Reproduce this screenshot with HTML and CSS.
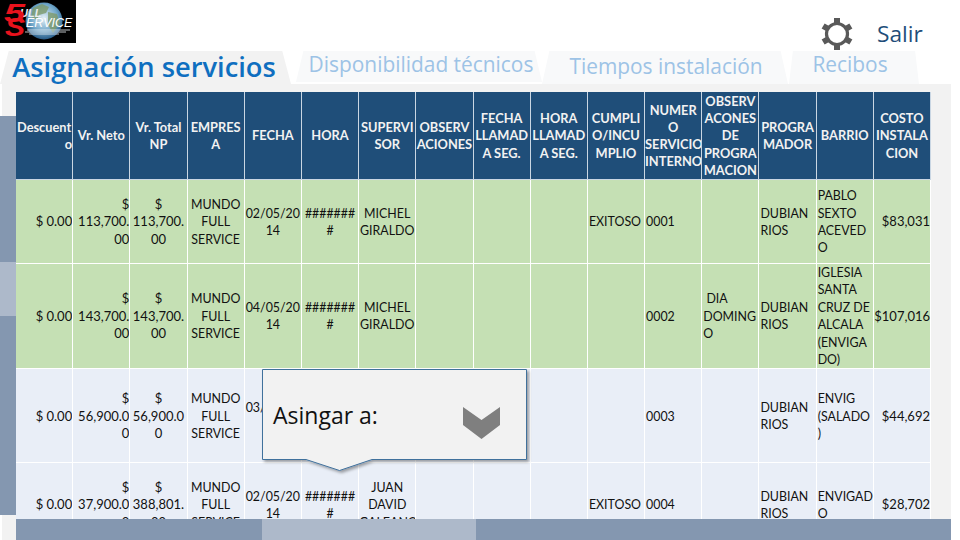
FILE: index.html
```html
<!DOCTYPE html>
<html lang="es">
<head>
<meta charset="utf-8">
<title>Asignación servicios</title>
<link rel="stylesheet" href="styles.css">
</head>
<body>
<div class="page">
  <header class="top">
    <svg class="logo" viewBox="0 0 76 43" width="76" height="43" aria-label="Full Service">
      <defs>
        <radialGradient id="globe" cx="0.5" cy="0.42" r="0.62">
          <stop offset="0" stop-color="#e4eff5"/>
          <stop offset="0.6" stop-color="#6fa6c9"/>
          <stop offset="1" stop-color="#174a78"/>
        </radialGradient>
      </defs>
      <rect width="76" height="43" fill="#000"/>
      <circle cx="44" cy="21" r="18.5" fill="url(#globe)"/>
      <path d="M33 8l9-4 7 3-3 6-7 2-2 5-6-3zM48 12l9 2 3 9-7 10-5-8z" fill="#7d9a6a" opacity=".8"/>
      <text x="20" y="17" class="logo-full">ULL</text>
      <text x="26" y="27" class="logo-service">ERVICE</text>
      <path d="M27 30h43M25 32h41M29 34h30" stroke="#e8eef2" stroke-width=".8"/>
      <text x="4" y="22" class="logo-num" textLength="21" lengthAdjust="spacingAndGlyphs">5</text>
      <text x="5" y="36" class="logo-num" textLength="20" lengthAdjust="spacingAndGlyphs">S</text>
    </svg>
    <div class="actions">
      <svg class="gear" viewBox="0 0 32 32" width="32" height="32" aria-label="Ajustes">
        <circle cx="16" cy="16" r="10.5" fill="none" stroke="#595959" stroke-width="3.2"/>
        <g fill="#595959">
          <rect x="13" y="0" width="6" height="6"/>
          <rect x="13" y="26" width="6" height="6"/>
          <rect x="13" y="0" width="6" height="6" transform="rotate(60 16 16)"/>
          <rect x="13" y="0" width="6" height="6" transform="rotate(120 16 16)"/>
          <rect x="13" y="0" width="6" height="6" transform="rotate(240 16 16)"/>
          <rect x="13" y="0" width="6" height="6" transform="rotate(300 16 16)"/>
        </g>
      </svg>
      <span class="exit">Salir</span>
    </div>
  </header>

  <nav class="tabs">
    <div class="tab tab-active">Asignación servicios</div>
    <div class="tab tab-two">Disponibilidad técnicos</div>
    <div class="tab tab-three">Tiempos instalación</div>
    <div class="tab tab-four">Recibos</div>
  </nav>

  <main class="panel">
    <div class="side-track"><div class="side-thumb"></div></div>
    <div class="sheet">
      <table class="grid">
        <thead>
          <tr>
            <th>Descuent<br><span class="end">o</span></th>
            <th>Vr. Neto</th>
            <th>Vr. Total NP</th>
            <th>EMPRES A</th>
            <th>FECHA</th>
            <th>HORA</th>
            <th>SUPERVI SOR</th>
            <th>OBSERV ACIONES</th>
            <th>FECHA LLAMAD A SEG.</th>
            <th>HORA LLAMAD A SEG.</th>
            <th>CUMPLI O/INCU MPLIO</th>
            <th>NUMER O SERVICIO INTERNO</th>
            <th>OBSERV ACONES DE PROGRA MACION</th>
            <th>PROGRA MADOR</th>
            <th>BARRIO</th>
            <th>COSTO INSTALA CION</th>
          </tr>
        </thead>
        <tbody>
          <tr class="row-a">
            <td class="num">$ 0.00</td>
            <td class="num">$<br>113,700.<br>00</td>
            <td class="mid amt">$<br>113,700.<br>00</td>
            <td class="mid">MUNDO FULL SERVICE</td>
            <td class="mid">02/05/20<br>14</td>
            <td class="mid">#######<br>#</td>
            <td class="mid">MICHEL GIRALDO</td>
            <td></td><td></td><td></td>
            <td>EXITOSO</td>
            <td>0001</td>
            <td></td>
            <td>DUBIAN RIOS</td>
            <td>PABLO SEXTO ACEVED<br>O</td>
            <td class="num">$83,031</td>
          </tr>
          <tr class="row-b">
            <td class="num">$ 0.00</td>
            <td class="num">$<br>143,700.<br>00</td>
            <td class="mid amt">$<br>143,700.<br>00</td>
            <td class="mid">MUNDO FULL SERVICE</td>
            <td class="mid">04/05/20<br>14</td>
            <td class="mid">#######<br>#</td>
            <td class="mid">MICHEL GIRALDO</td>
            <td></td><td></td><td></td>
            <td></td>
            <td>0002</td>
            <td>&nbsp;DIA DOMING<br>O</td>
            <td>DUBIAN RIOS</td>
            <td>IGLESIA SANTA CRUZ DE ALCALA (ENVIGA<br>DO)</td>
            <td class="num">$107,016</td>
          </tr>
          <tr class="row-c">
            <td class="num">$ 0.00</td>
            <td class="num">$<br>56,900.0<br>0</td>
            <td class="mid amt">$<br>56,900.0<br>0</td>
            <td class="mid">MUNDO FULL SERVICE</td>
            <td class="mid">03/05/20<br>14</td>
            <td class="mid">#######<br>#</td>
            <td class="mid"></td>
            <td></td><td></td><td></td>
            <td></td>
            <td>0003</td>
            <td></td>
            <td>DUBIAN RIOS</td>
            <td>ENVIG (SALADO<br>)</td>
            <td class="num">$44,692</td>
          </tr>
          <tr class="row-d">
            <td class="num">$ 0.00</td>
            <td class="num">$<br>37,900.0<br>0</td>
            <td class="mid amt">$<br>388,801.<br>00</td>
            <td class="mid">MUNDO FULL SERVICE</td>
            <td class="mid">02/05/20<br>14</td>
            <td class="mid">#######<br>#</td>
            <td class="mid">JUAN DAVID GALEANO</td>
            <td></td><td></td><td></td>
            <td>EXITOSO</td>
            <td>0004</td>
            <td></td>
            <td>DUBIAN RIOS</td>
            <td>ENVIGAD<br>O</td>
            <td class="num">$28,702</td>
          </tr>
        </tbody>
      </table>
      <div class="bottom-track"><div class="bottom-thumb"></div></div>
    </div>

    <div class="callout">
      <svg class="callout-shape" viewBox="0 0 270 110" width="270" height="110" aria-hidden="true">
        <defs>
          <filter id="drop" x="-5%" y="-5%" width="112%" height="120%">
            <feDropShadow dx="2" dy="2" stdDeviation="1.5" flood-color="#000" flood-opacity=".35"/>
          </filter>
        </defs>
        <path d="M.5 .5H264.5V90.5H110L77.5 101.5 44 90.5H.5Z" fill="#f2f2f2" stroke="#41719c" filter="url(#drop)"/>
      </svg>
      <span class="callout-label">Asingar a:</span>
      <svg class="chevron" viewBox="0 0 37 32" width="37" height="32" aria-hidden="true">
        <path d="M0 0 18.5 13 37 0V18L18.5 32 0 18Z" fill="#7f7f7f"/>
      </svg>
    </div>
  </main>
</div>
</body>
</html>
```

FILE: styles.css
```css
* { box-sizing: border-box; }
html, body { margin: 0; padding: 0; background: #fff; }
body { font-family: Lato, "Open Sans", sans-serif; color: #111; }
.page { width: 960px; height: 540px; overflow: hidden; display: flex; flex-direction: column; }

.top { height: 51px; display: flex; justify-content: space-between; align-items: flex-start; flex: none; }
.logo { display: block; }
.logo-full { font: italic 700 11px "Liberation Sans", sans-serif; fill: #e9eef2; }
.logo-service { font: italic 400 12.5px "Liberation Sans", sans-serif; fill: #fff; }
.logo-num { font: italic 700 25px "Liberation Sans", sans-serif; fill: #e8121c; }
.actions { display: flex; align-items: flex-start; gap: 24px; width: 139px; padding-top: 18px; }
.gear { display: block; flex: none; }
.exit { font: 400 22.7px/32px "Open Sans", sans-serif; color: #1f4e79; }

.tabs { height: 33px; display: flex; flex: none; position: relative; }
.tab { font-family: "Open Sans", sans-serif; color: #9dc3e6; font-size: 20.9px; line-height: 26px; text-align: center; white-space: nowrap; background: #f8f9fa; clip-path: polygon(3% 0, 97% 0, 100% 100%, 0 100%); }
.tab-active { width: 291px; font-size: 27.3px; font-weight: 600; color: #0f6fc0; background: #f2f2f2; line-height: 32px; padding-right: 3px; }
.tab-two { width: 246px; margin-left: 5px; height: 31px; padding-left: 4px; }
.tab-three { width: 246px; height: 33px; padding-top: 2px; padding-left: 2px; }
.tab-four { width: 130px; margin-left: 1px; height: 33px; padding-right: 8px; }

.panel { position: relative; flex: 1; margin: 0 9px 0 2px; background: #f2f2f2; padding: 8px 0 0 14px; display: flex; align-items: flex-start; }
.side-track { position: absolute; left: -2px; top: 32px; bottom: 25px; width: 17px; background: #8497b0; }
.side-thumb { margin-top: 146px; height: 54px; background: #adb9ca; }
.sheet { position: relative; width: 935px; height: 448px; overflow: hidden; }

.grid { width: 916px; margin: -1px 0 0 -1px; table-layout: fixed; border-collapse: collapse; font-size: 12.4px; line-height: 17.4px; }
.grid th { background: #1f4e79; color: #f2f2f2; font-size: 12.8px; line-height: 17.2px; font-weight: 700; text-align: center; padding: 1px 0 0 0; height: 88px; border: 1px solid #c9d6e3; border-top-color: #fff; overflow: hidden; }
.grid td { border: 1px solid #fff; padding: 1px 0 0 1px; vertical-align: middle; text-align: left; overflow: hidden; }
.grid td.num { text-align: right; padding: 1px 0 0 0; font-size: 13px; }
.grid td.mid { text-align: center; padding: 1px 0 0 0; }
.grid td.amt { font-size: 13px; }
.grid .end { display: block; text-align: right; }
.row-a td { background: #c5e0b4; height: 84px; }
.row-b td { background: #c5e0b4; height: 105px; }
.grid .row-b td { padding-top: 0; }
.row-c td { background: #e9eef7; height: 94px; }
.row-d td { background: #e9eef7; height: 83px; }

.bottom-track { position: absolute; left: 0; right: 0; top: 427px; height: 21px; background: #8497b0; }
.bottom-thumb { margin-left: 246px; width: 214px; height: 21px; background: #adb9ca; }

.callout { position: absolute; left: 260px; top: 285px; width: 270px; height: 110px; }
.callout-shape { position: absolute; inset: 0; display: block; overflow: visible; }
.callout-label { position: absolute; left: 11px; top: 29px; font: 400 23px/34px "Open Sans", sans-serif; color: #111; }
.chevron { position: absolute; left: 201px; top: 38px; display: block; }
```
